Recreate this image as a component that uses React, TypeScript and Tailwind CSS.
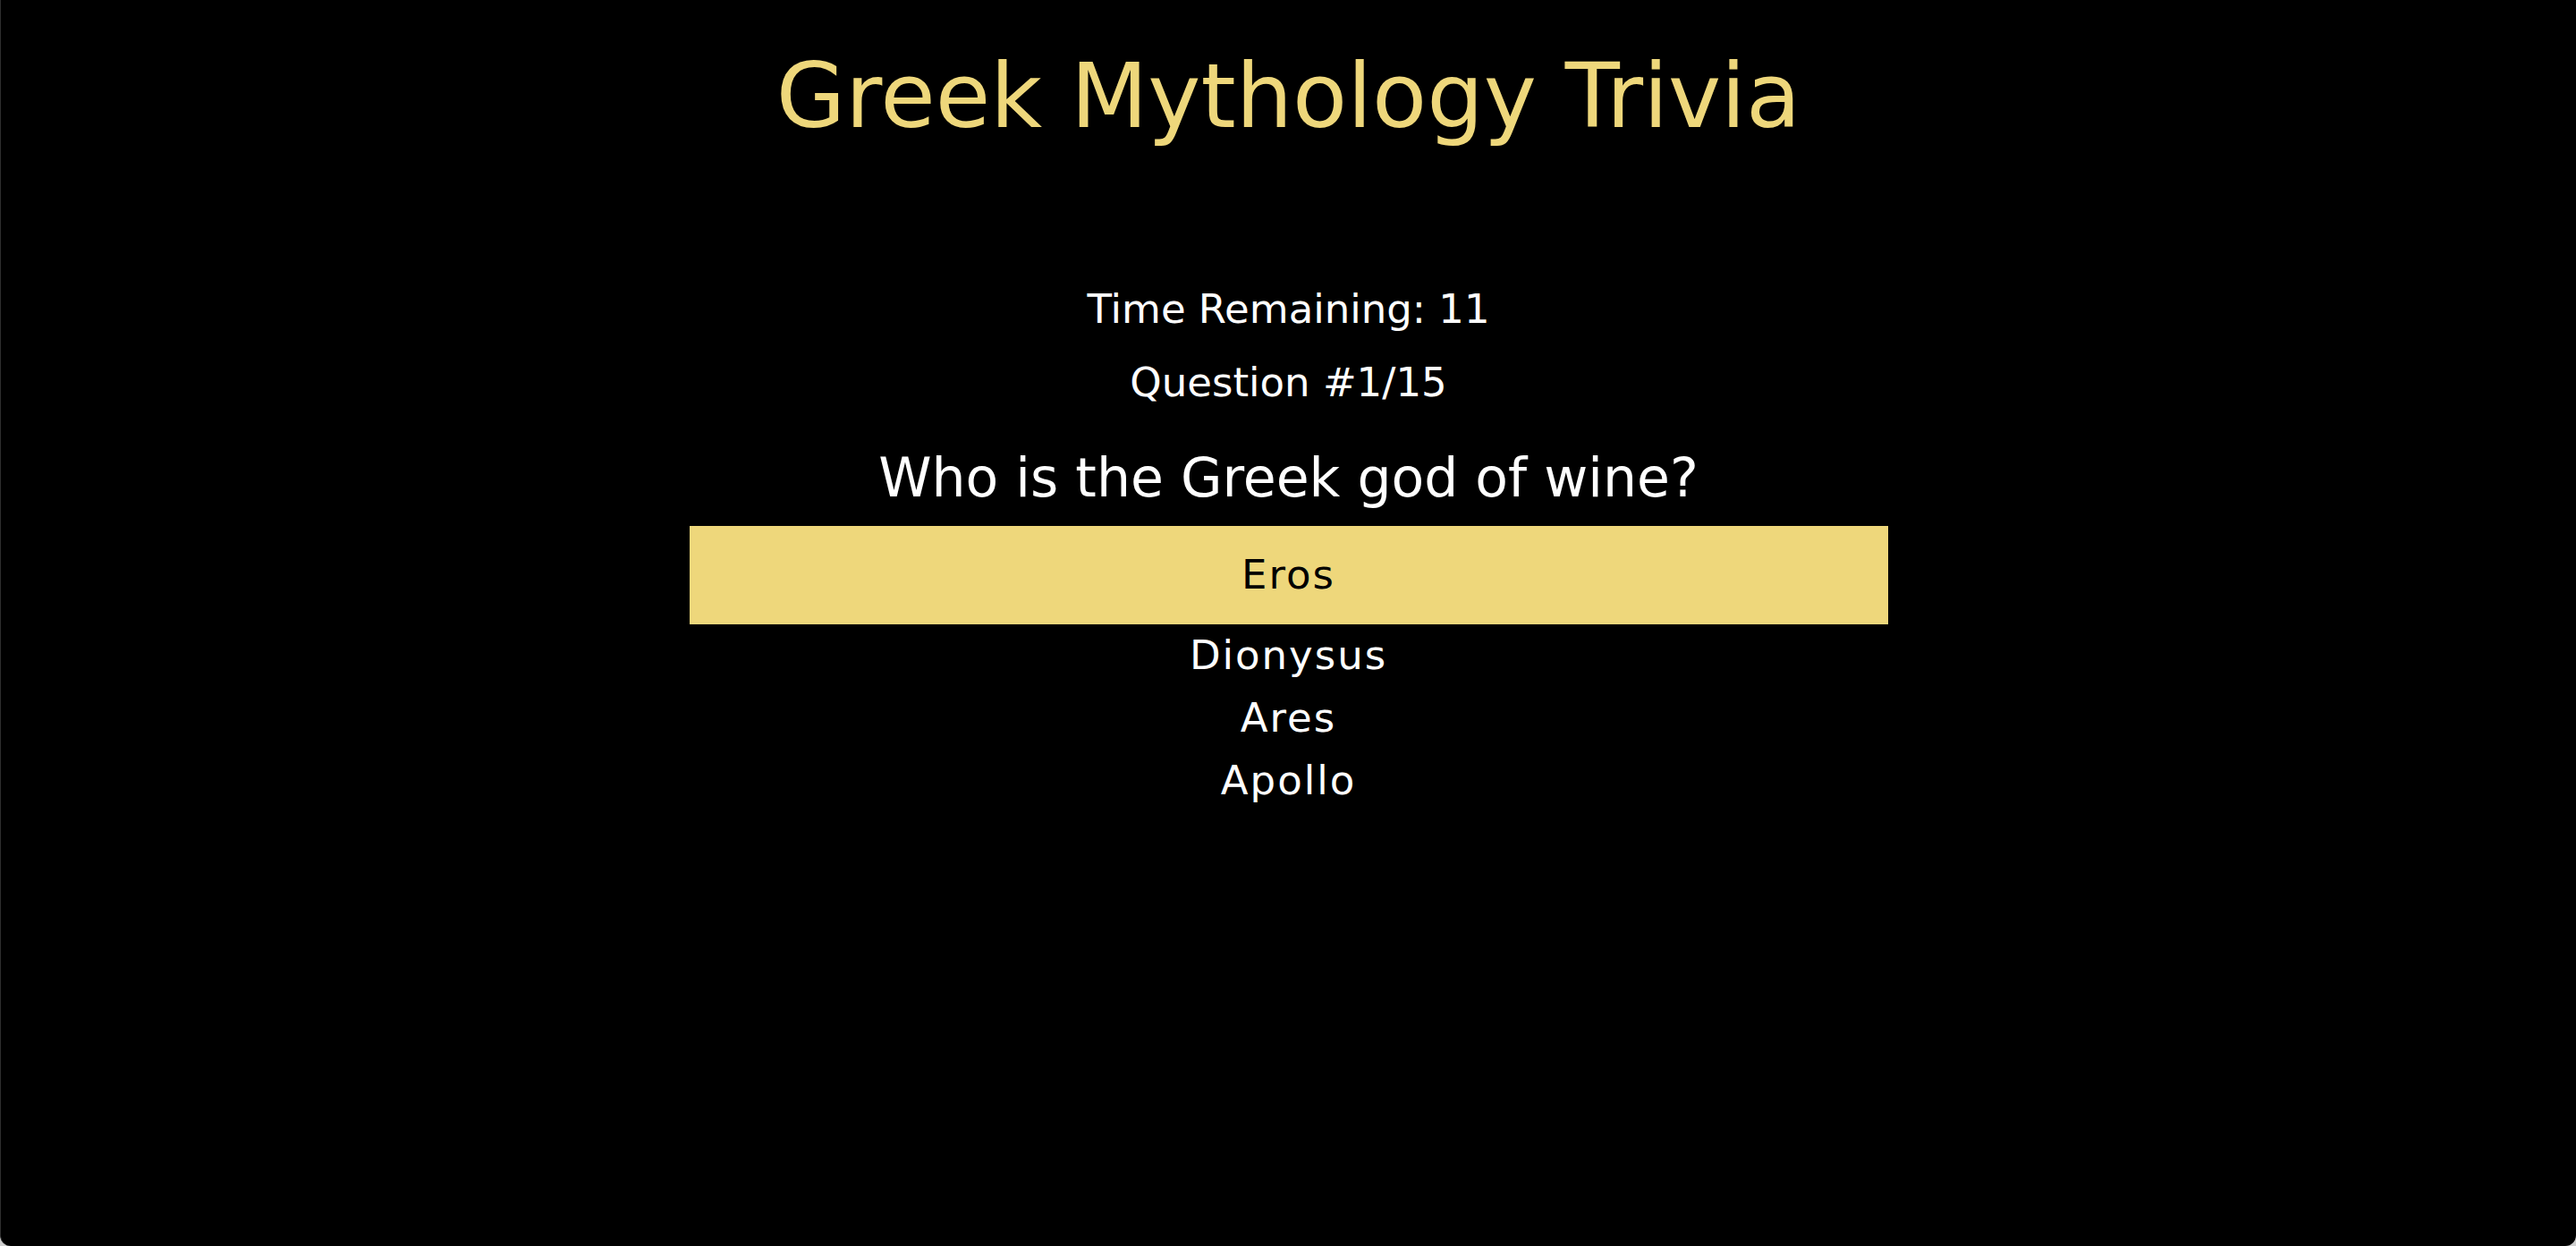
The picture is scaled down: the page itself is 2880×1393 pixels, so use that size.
import React from "react";

const answers = ["Eros", "Dionysus", "Ares", "Apollo"];

export default function App() {
  return (
    <div className="h-[1393px] w-full bg-[#cfcfcf]">
      <div
        className="h-full w-full bg-black rounded-b-[12px] border-l border-[#2e2e2e] flex flex-col items-center"
        style={{ fontFamily: '"DejaVu Sans", "Noto Sans", sans-serif' }}
      >
        <h1 className="mt-[51px] text-[100px] leading-[114px] font-normal text-[#eed77b]">
          Greek Mythology Trivia
        </h1>
        <div className="mt-[140px] flex flex-col items-center text-white text-[45px] leading-[82px]">
          <div>Time Remaining: 11</div>
          <div>Question #1/15</div>
        </div>
        <div className="mt-[25px] text-white text-[60px] leading-[80px]">
          Who is the Greek god of wine?
        </div>
        <ul className="mt-[14px] w-[1340px] flex flex-col text-[45px] leading-[70px] text-center tracking-[2px]">
          {answers.map((a, i) => (
            <li
              key={a}
              className={
                i === 0
                  ? "py-[20px] bg-[#eed77b] text-black cursor-pointer"
                  : "text-white cursor-pointer"
              }
            >
              {a}
            </li>
          ))}
        </ul>
      </div>
    </div>
  );
}
